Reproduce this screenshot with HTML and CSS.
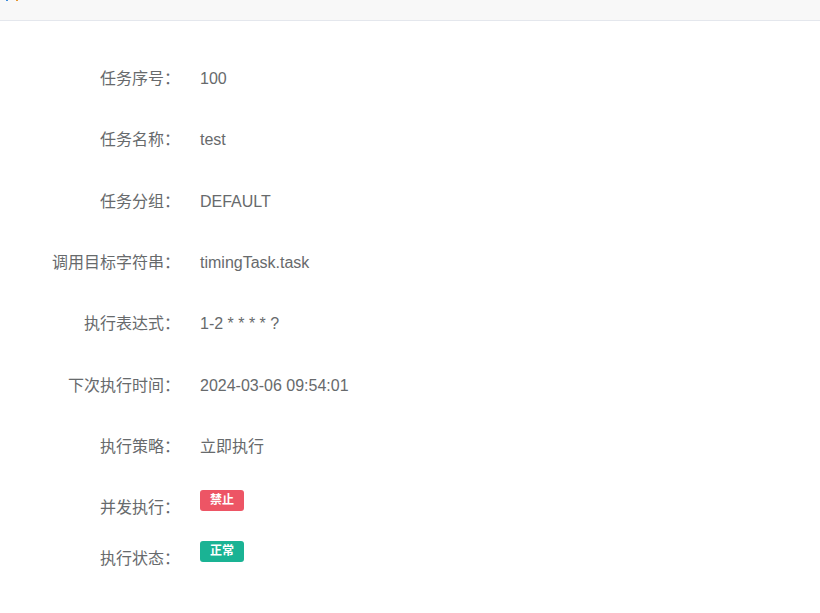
FILE: index.html
```html
<!DOCTYPE html>
<html lang="zh">
<head>
<meta charset="utf-8">
<link rel="stylesheet" href="styles.css">
</head>
<body>
<div class="topbar"><span class="dot dot-blue"></span><span class="dot dot-orange"></span></div>
<div class="form">
  <div class="row"><div class="label">任务序号：</div><div class="value">100</div></div>
  <div class="row"><div class="label">任务名称：</div><div class="value">test</div></div>
  <div class="row"><div class="label">任务分组：</div><div class="value">DEFAULT</div></div>
  <div class="row"><div class="label">调用目标字符串：</div><div class="value">timingTask.task</div></div>
  <div class="row"><div class="label">执行表达式：</div><div class="value">1-2 * * * * ?</div></div>
  <div class="row"><div class="label">下次执行时间：</div><div class="value">2024-03-06 09:54:01</div></div>
  <div class="row"><div class="label">执行策略：</div><div class="value">立即执行</div></div>
  <div class="row row-badge"><div class="label">并发执行：</div><div class="value"><span class="badge badge-danger">禁止</span></div></div>
  <div class="row row-badge"><div class="label">执行状态：</div><div class="value"><span class="badge badge-primary">正常</span></div></div>
</div>
</body>
</html>
```
FILE: styles.css
```css
html, body {
  margin: 0;
  padding: 0;
  background: #fff;
  font-family: "Liberation Sans", Arial, "Noto Sans CJK SC", sans-serif;
  font-size: 16px;
  color: #676a6c;
}
.topbar {
  height: 20px;
  background: #f8f8f8;
  border-bottom: 1px solid #e4e7ed;
  display: flex;
  align-items: flex-start;
  gap: 8px;
  padding-left: 6px;
}
.dot {
  width: 2px;
  height: 1px;
  display: block;
}
.dot-blue { background: #3c8dde; }
.dot-orange { background: #e8962f; }
.form {
  padding-top: 47px;
}
.row {
  display: flex;
  align-items: flex-start;
  height: 61.33px;
  line-height: 22px;
}
.row-badge {
  height: 51px;
}
.label {
  width: 180px;
  text-align: right;
  flex: none;
}
.value {
  margin-left: 20px;
}
.badge {
  display: inline-block;
  margin-top: -7px;
  padding: 3px 10px;
  font-size: 12px;
  line-height: 15px;
  font-weight: bold;
  color: #fff;
  border-radius: 3px;
  vertical-align: top;
}
.badge-danger { background: #ed5565; }
.badge-primary { background: #1ab394; }
```
